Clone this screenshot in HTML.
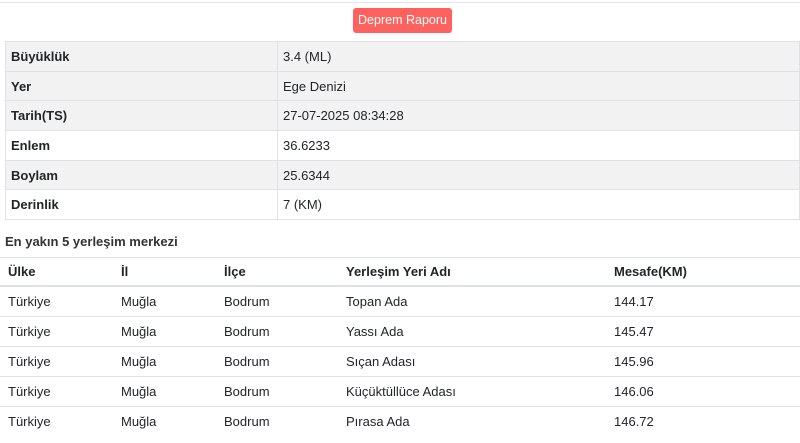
<!DOCTYPE html>
<html><head><meta charset="utf-8"><style>
body{margin:0;width:800px;height:443px;overflow:hidden;background:#fff;font-family:"Liberation Sans",sans-serif;font-size:13px;color:#212529}
.top{position:absolute;left:0;top:0;width:800px;height:2px;border-bottom:1px solid #e6e6e6}
.btn{position:absolute;left:353px;top:8px;width:99px;height:25px;background:#fd625e;color:#fff;border-radius:3px;text-align:center;line-height:25px;font-size:12.5px}
table{border-collapse:collapse;position:absolute}
#t1{left:5px;top:41px;width:795px}
#t1 td{height:28.7px;border:1px solid #dee2e6;padding:0 5px}
#t1 td:first-child{width:261px;font-weight:bold}
.g td{background:#f2f2f2}
h4{position:absolute;left:5px;top:234px;margin:0;font-size:13px;font-weight:bold;color:#333}
#t2{left:0;top:257px;width:800px}
#t2 td,#t2 th{text-align:left;padding:0 0 0 8px;height:29px;border-top:1px solid #dee2e6}
#t2 th{border-bottom:2px solid #dee2e6;height:27px}
</style></head><body>
<div class="top"></div>
<div class="btn">Deprem Raporu</div>
<table id="t1">
<tr class="g"><td>Büyüklük</td><td>3.4 (ML)</td></tr>
<tr class="g"><td>Yer</td><td>Ege Denizi</td></tr>
<tr class="g"><td>Tarih(TS)</td><td>27-07-2025 08:34:28</td></tr>
<tr><td>Enlem</td><td>36.6233</td></tr>
<tr class="g"><td>Boylam</td><td>25.6344</td></tr>
<tr><td>Derinlik</td><td>7 (KM)</td></tr>
</table>
<h4>En yakın 5 yerleşim merkezi</h4>
<table id="t2">
<colgroup><col style="width:113px"><col style="width:103px"><col style="width:122px"><col style="width:268px"><col></colgroup>
<tr><th>Ülke</th><th>İl</th><th>İlçe</th><th>Yerleşim Yeri Adı</th><th>Mesafe(KM)</th></tr>
<tr><td>Türkiye</td><td>Muğla</td><td>Bodrum</td><td>Topan Ada</td><td>144.17</td></tr>
<tr><td>Türkiye</td><td>Muğla</td><td>Bodrum</td><td>Yassı Ada</td><td>145.47</td></tr>
<tr><td>Türkiye</td><td>Muğla</td><td>Bodrum</td><td>Sıçan Adası</td><td>145.96</td></tr>
<tr><td>Türkiye</td><td>Muğla</td><td>Bodrum</td><td>Küçüktüllüce Adası</td><td>146.06</td></tr>
<tr><td>Türkiye</td><td>Muğla</td><td>Bodrum</td><td>Pırasa Ada</td><td>146.72</td></tr>
</table>
</body></html>
